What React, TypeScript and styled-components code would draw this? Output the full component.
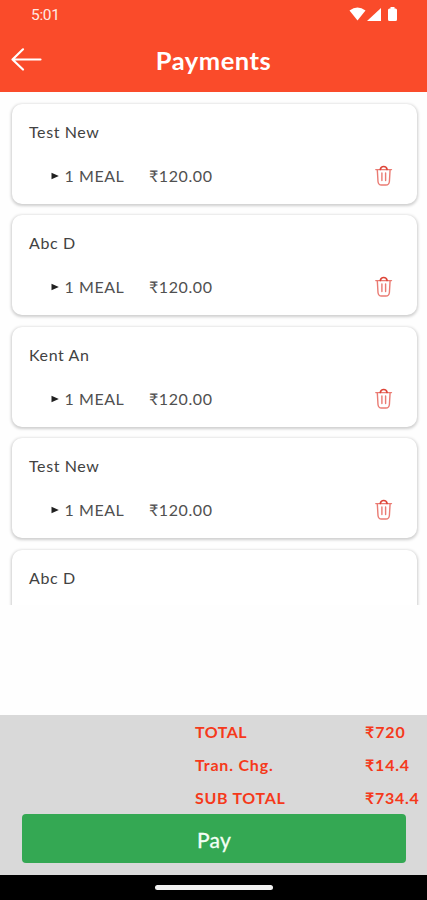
import React from "react";
import styled, { createGlobalStyle } from "styled-components";

const GlobalStyle = createGlobalStyle`
  * { box-sizing: border-box; }
  body { margin: 0; background: #fff; font-family: Lato, "Noto Sans", sans-serif; }
`;

const Screen = styled.div`
  width: 427px;
  height: 900px;
  display: flex;
  flex-direction: column;
  overflow: hidden;
  background: #fefefe;
`;

const Header = styled.header`
  height: 91.5px;
  flex: none;
  background: #fa4b2a;
  color: #fff;
`;

const StatusBar = styled.div`
  height: 30px;
  padding: 0 28px 0 31px;
  display: flex;
  align-items: center;
  justify-content: space-between;
  font: 400 15.5px/30px Roboto, sans-serif;
  letter-spacing: -0.3px;
  color: #ffeae4;
`;

const TitleBar = styled.div`
  height: 60px;
  display: grid;
  grid-template-columns: 54px 1fr 54px;
  align-items: center;
`;

const BackButton = styled.button`
  border: 0;
  padding: 0 0 2px 10px;
  background: none;
  display: flex;
`;

const Title = styled.h1`
  margin: 0;
  font-size: 25.5px;
  line-height: 58px;
  font-weight: 700;
  letter-spacing: 0.5px;
  text-align: center;
`;

const List = styled.main`
  height: 513.5px;
  flex: none;
  overflow: hidden;
  padding: 12px 10.5px 0 12px;
  display: flex;
  flex-direction: column;
  gap: 11.6px;
`;

const Card = styled.article`
  height: 100px;
  flex: none;
  padding: 16px 23px 0 17px;
  border-radius: 10px;
  background: #fff;
  box-shadow: 0 1px 3px 1px rgba(0, 0, 0, 0.19);
`;

const Name = styled.div`
  height: 24px;
  font-size: 16px;
  line-height: 24px;
  letter-spacing: 0.6px;
  color: #424242;
`;

const MealRow = styled.div`
  height: 24px;
  margin-top: 20px;
  padding-left: 22px;
  display: grid;
  grid-template-columns: 13.5px 84.5px 1fr auto;
  align-items: center;
  font-size: 16px;
  line-height: 24px;
  color: #505050;
`;

const Meal = styled.span`
  letter-spacing: 0.55px;
`;

const Amount = styled.span`
  letter-spacing: 0.6px;
`;

const Spacer = styled.div`
  flex: 1;
`;

const Footer = styled.footer`
  height: 160px;
  flex: none;
  background: #d9d9d9;
`;

const TotalRow = styled.div`
  height: 33px;
  padding-left: 195px;
  display: grid;
  grid-template-columns: 170px 1fr;
  font-size: 16px;
  line-height: 33px;
  font-weight: 700;
  color: #f5391b;
`;

const TotalText = styled.span<{ $spacing: number }>`
  letter-spacing: ${(p) => p.$spacing}px;
  white-space: nowrap;
`;

const PayButton = styled.button`
  display: block;
  width: 384px;
  height: 49px;
  margin: 0 0 0 22px;
  padding: 2px 0 0;
  border: 0;
  border-radius: 4px;
  background: #34a853;
  color: #f4fff5;
  font: 400 21px/47px Lato, sans-serif;
  letter-spacing: 0.3px;
  -webkit-text-stroke: 0.3px #f4fff5;
`;

const NavigationBar = styled.div`
  height: 25px;
  flex: none;
  background: #000;
  display: flex;
  justify-content: center;
  padding-top: 10px;
`;

const HomeHandle = styled.div`
  width: 118px;
  height: 5px;
  border-radius: 2.5px;
  background: #f2f2f2;
`;

const StatusIcons = () => (
  <svg width="50" height="18" viewBox="0 0 50 18" fill="#fff">
    <path d="M0.500 4.500 Q8.500 -1.500 16.500 4.500 L8.500 14.500Z" />
    <path d="M18 15 32 2V15Z" />
    <path d="M41.500 1h4v1.500h1a1.500 1.500 0 0 1 1.500 1.500V13.500a1.500 1.500 0 0 1-1.500 1.500h-6a1.500 1.500 0 0 1-1.500-1.500V4a1.500 1.500 0 0 1 1.500-1.500h1Z" />
  </svg>
);

const BackIcon = () => (
  <svg width="32" height="26" viewBox="0 0 32 26" fill="none" stroke="#fff" strokeWidth="2.200" strokeLinecap="round" strokeLinejoin="round">
    <path d="M30.500 13.500H2.500M13 3.300 2.500 13.500l10.500 10" />
  </svg>
);

const TrashIcon = () => (
  <svg width="20" height="22" viewBox="0 0 20 22" fill="none" stroke="#ea7b73" strokeWidth="1.400" strokeLinecap="round" strokeLinejoin="round">
    <path d="M1.800 4.600h15.700M3.300 4.600l.7 11.900q.3 3.500 3.500 3.500h4.400q3.200 0 3.500-3.500l.7-11.900" />
    <path d="M6.300 4.500Q6.800 1.500 9.700 1.500t3.400 3" stroke="#dd4437" strokeWidth="1.600" />
    <path d="M7.900 8v7.500M11.600 8v7.500" />
  </svg>
);

const BulletIcon = () => (
  <svg width="9" height="8" viewBox="0 0 9 8" fill="#202020">
    <path d="M.5.800 7.800 4 .5 7.200Z" />
  </svg>
);

type Order = { name: string; meal?: string; price?: string };

const orders: Order[] = [
  { name: "Test New", meal: "1 MEAL", price: "₹120.00" },
  { name: "Abc D", meal: "1 MEAL", price: "₹120.00" },
  { name: "Kent An", meal: "1 MEAL", price: "₹120.00" },
  { name: "Test New", meal: "1 MEAL", price: "₹120.00" },
  { name: "Abc D" },
];

const totals = [
  { label: "TOTAL", value: "₹720", spacing: 0.5, valueSpacing: 0.9 },
  { label: "Tran. Chg.", value: "₹14.4", spacing: 0.8, valueSpacing: 0.8 },
  { label: "SUB TOTAL", value: "₹734.4", spacing: 0.7, valueSpacing: 0.7 },
];

export default function App() {
  return (
    <Screen>
      <GlobalStyle />
      <Header>
        <StatusBar>
          <span>5:01</span>
          <StatusIcons />
        </StatusBar>
        <TitleBar>
          <BackButton aria-label="Back">
            <BackIcon />
          </BackButton>
          <Title>Payments</Title>
        </TitleBar>
      </Header>
      <List>
        {orders.map((order, index) => (
          <Card key={index}>
            <Name>{order.name}</Name>
            {order.meal && (
              <MealRow>
                <BulletIcon />
                <Meal>{order.meal}</Meal>
                <Amount>{order.price}</Amount>
                <TrashIcon />
              </MealRow>
            )}
          </Card>
        ))}
      </List>
      <Spacer />
      <Footer>
        {totals.map((total) => (
          <TotalRow key={total.label}>
            <TotalText $spacing={total.spacing}>{total.label}</TotalText>
            <TotalText $spacing={total.valueSpacing}>{total.value}</TotalText>
          </TotalRow>
        ))}
        <PayButton>Pay</PayButton>
      </Footer>
      <NavigationBar>
        <HomeHandle />
      </NavigationBar>
    </Screen>
  );
}
